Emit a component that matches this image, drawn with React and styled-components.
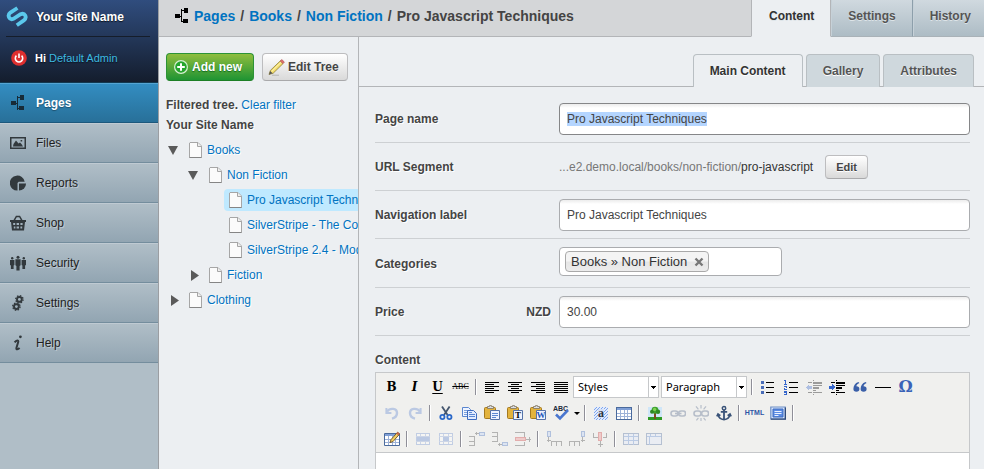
import React, { useEffect, useRef } from "react";
import styled, { createGlobalStyle, css } from "styled-components";

const GlobalStyle = createGlobalStyle`
  *, *::before, *::after { box-sizing: border-box; }
  body {
    margin: 0;
    background: #eceff2;
    color: #444;
    font: 12px/16px "Liberation Sans", Arial, sans-serif;
  }
  button, input, select, textarea { font: inherit; color: inherit; }
  button { cursor: pointer; }
  a { color: #0073c1; text-decoration: none; }
`;

/* ---------- Frame ---------- */

const Shell = styled.div`
  display: flex;
  height: 100vh;
  overflow: hidden;
`;

const Sidebar = styled.aside`
  flex: 0 0 159px;
  background: #b0bec7;
  border-right: 1px solid #9b9ea2;
`;

const Main = styled.main`
  flex: 1;
  min-width: 0;
  display: flex;
  flex-direction: column;
`;

const Body = styled.div`
  flex: 1;
  min-height: 0;
  display: flex;
`;

/* ---------- Sidebar ---------- */

const Branding = styled.div`
  height: 83px;
  padding: 0 8px 0 6px;
  background: linear-gradient(#304d7e, #141d2d);
  border-bottom: 1px solid #11384f;
  text-shadow: 0 1px 1px #0c1420;
`;

const SiteName = styled.a`
  display: flex;
  align-items: center;
  gap: 8px;
  height: 37px;
  padding-bottom: 3px;
  border-bottom: 1px solid #151d2a;
  color: #fff;
  font-weight: bold;
`;

const LoginStatus = styled.div`
  display: flex;
  align-items: center;
  gap: 8px;
  height: 42px;
  padding-left: 5px;
  color: #fff;
  font-size: 11px;

  a { color: #3ebae0; }
`;

const Menu = styled.nav`
  display: flex;
  flex-direction: column;
`;

const MenuLink = styled.a`
  display: flex;
  align-items: center;
  gap: 10px;
  height: 40px;
  padding-left: 10px;
  border-top: 1px solid #bfcad2;
  border-bottom: 1px solid #748d9d;
  background: linear-gradient(#b0bec7, #92a5b2);
  color: #1f1f1f;
  text-shadow: 1px 1px 0 #bfcad2;
  svg { color: #32393d; }

  ${(p) => p.$current && css`
    border-top-color: #55a4d2;
    border-bottom-color: #1c587c;
    background: linear-gradient(#338dc1, #287099);
    color: #fff;
    font-weight: bold;
    text-shadow: 0 1px 1px #1e5270;
    svg { color: #172b38; }
  `}
`;

/* ---------- Header ---------- */

const Header = styled.header`
  display: flex;
  height: 37px;
  font-weight: bold;
`;

const Breadcrumbs = styled.nav`
  flex: 1;
  display: flex;
  align-items: center;
  gap: 5px;
  padding: 0 0 4px 16px;
  background: #d4d6d8;
  border-bottom: 1px solid #b3b5b8;
  font-size: 14px;
  white-space: nowrap;
  svg { color: #000; margin-right: 1px; }
`;

const Tab = styled.button`
  height: 37px;
  padding: 0 16px 4px 17px;
  border: 0;
  border-right: 1px solid #8d9fab;
  border-bottom: 1px solid #a9b2b8;
  background: linear-gradient(#d0d9df, #adbcc5);
  box-shadow: inset 1px 0 0 #c6d1d8;
  color: #545454;
  font-weight: bold;
  text-shadow: 0 1px 0 #dde4e8;

  &:last-child {
    padding-right: 13px;
    border-right: 0;
  }

  ${(p) => p.$current && css`
    background: #eceff2;
    box-shadow: none;
    border-left: 1px solid #b3b5b8;
    border-right-color: #b3b5b8;
    border-bottom-color: #eceff2;
    color: #333;
  `}
`;

/* ---------- Page tree ---------- */

const TreePanel = styled.section`
  flex: 0 0 200px;
  overflow: hidden;
  padding: 16px 0 0 7px;
  border-right: 1px solid #b3b5b8;
  text-shadow: 1px 1px 0 #fff;
`;

const Actions = styled.div`
  display: flex;
  gap: 8px;
  margin-bottom: 14px;
`;

const Button = styled.button`
  display: flex;
  align-items: center;
  justify-content: center;
  height: 28px;
  padding: 0 8px 0 5px;
  gap: 3px;
  border: 1px solid #bdbdbf;
  border-bottom-color: #a9a9ab;
  border-radius: 4px;
  background: linear-gradient(#fff, #d9d9d9);
  font-weight: bold;
  white-space: nowrap;
  text-shadow: 0 1px 0 #fff;

  ${(p) => p.$constructive && css`
    padding: 0 11px 0 6px;
    border-color: #2c9336;
    border-bottom-color: #1d7f26;
    background: linear-gradient(#8fbd3e, #1f9433);
    color: #fff;
    text-shadow: 0 1px 1px #146b1e;
  `}

  ${(p) => p.$small && css`
    height: 24px;
    padding: 0 10px;
    font-size: 11px;
  `}
`;

const TreeLine = styled.div`
  line-height: 20px;
  font-weight: bold;
  a { font-weight: normal; }
`;

const TreeList = styled.ul`
  margin: 0;
  padding: 0 0 0 ${(p) => (p.$nested ? 20 : 0)}px;
  list-style: none;
`;

const TreeRoot = styled.div`
  padding-top: 2px;
`;

const TreeRow = styled.div`
  display: flex;
  align-items: center;
  height: 25px;
`;

const Toggle = styled.button`
  flex: 0 0 18px;
  height: 18px;
  padding: 0;
  border: 0;
  background: none;
  color: #5a5a5a;
  svg { display: block; }
`;

const Spacer = styled.span`
  flex: 0 0 18px;
`;

const TreeLink = styled.a`
  flex: 1;
  min-width: 0;
  overflow: hidden;
  display: flex;
  align-items: center;
  gap: 4px;
  height: 22px;
  padding-left: 5px;
  border-radius: 4px 0 0 4px;
  background: ${(p) => (p.$current ? "#bfe9ff" : "none")};
  white-space: nowrap;
  text-shadow: ${(p) => (p.$current ? "none" : "inherit")};
  svg { flex: none; }
`;

/* ---------- Edit form ---------- */

const EditPanel = styled.section`
  flex: 1;
  min-width: 0;
  display: flex;
  flex-direction: column;
`;

const SubTabs = styled.div`
  display: flex;
  justify-content: flex-end;
  align-items: flex-end;
  gap: 3px;
  height: 50px;
  padding-right: 10px;
  border-bottom: 1px solid #b3b5b8;
`;

const SubTab = styled.button`
  height: 33px;
  margin-bottom: -1px;
  padding: 0 16px;
  border: 1px solid #b9bfc3;
  border-bottom: 0;
  border-radius: 4px 4px 0 0;
  background: ${(p) => (p.$current ? "#eceff2" : "#cfd8dd")};
  color: ${(p) => (p.$current ? "#333" : "#545454")};
  font-weight: bold;
  text-shadow: 0 1px 0 #fff;
`;

const Form = styled.form`
  flex: 1;
  min-height: 0;
  display: flex;
  flex-direction: column;
  padding: 8px 14px 0 16px;
`;

const Field = styled.div`
  display: flex;
  align-items: center;
  min-height: 48px;
  padding: 8px 0 7px;
  border-bottom: 1px solid #cdd0d3;
`;

const Label = styled.label`
  flex: 0 0 184px;
  display: flex;
  justify-content: space-between;
  padding-right: 8px;
  font-weight: bold;
  text-shadow: 1px 1px 0 #fff;
`;

const EditorLabel = styled(Label)`
  flex: none;
  margin: 16px 0 4px;
`;

const TextInput = styled.input`
  flex: 1;
  min-width: 0;
  height: 32px;
  padding: 0 7px;
  border: 1px solid #aaacaf;
  border-radius: 4px;
  background: #fff linear-gradient(#ececec, #fff) no-repeat 0 0 / 100% 4px;
  line-height: 15px;
  outline: none;

  &:focus { border-color: #858688; }
  &::selection { background: #b4d5ff; color: #444; }
`;

const UrlText = styled.span`
  margin-right: 12px;
  color: #333;
`;

const UrlPrefix = styled.span`
  color: #777;
`;

const TagBox = styled.div`
  display: flex;
  align-items: center;
  width: 223px;
  height: 29px;
  margin-bottom: 4px;
  padding: 0 5px;
  border: 1px solid #aaacaf;
  border-radius: 4px;
  background: #fff;
`;

const Tag = styled.span`
  display: flex;
  align-items: center;
  gap: 7px;
  height: 21px;
  padding: 0 4px 0 5px;
  border: 1px solid #a9a9a9;
  border-radius: 4px;
  background: linear-gradient(#f4f4f4 45%, #e6e6e6 55%, #ececec);
  color: #333;
  font-size: 13px;
  white-space: nowrap;
`;

const TagRemove = styled.button`
  padding: 0;
  border: 0;
  background: none;
  color: #777;
  svg { display: block; }
`;

const TagInput = styled.input`
  flex: 1;
  min-width: 0;
  border: 0;
  background: none;
  outline: none;
`;

/* ---------- Rich text editor ---------- */

const Editor = styled.div`
  flex: 1;
  min-height: 0;
  display: flex;
  flex-direction: column;
  border: 1px solid #c6c8ca;
  border-bottom: 0;
  background: #fff;
`;

const Toolbar = styled.div`
  display: flex;
  flex-direction: column;
  gap: 4px;
  padding: 3px 0 2px 4px;
  background: #f0f0ee;
  border-bottom: 1px solid #c6c8ca;
`;

const ToolRow = styled.div`
  display: flex;
  align-items: center;
  height: 22px;
`;

const Tool = styled.button`
  flex: 0 0 ${(p) => (p.$narrow ? 9 : 23)}px;
  display: flex;
  align-items: center;
  justify-content: center;
  height: 22px;
  padding: 0;
  border: 0;
  background: none;
  color: #000;
  opacity: ${(p) => (p.disabled ? 0.35 : 1)};
`;

const Divider = styled.span`
  flex: 0 0 2px;
  height: 16px;
  margin: 0 3px;
  border-left: 1px solid #8f8f98;
  border-right: 1px solid #fff;
`;

const Letter = styled.span`
  font: ${(p) => (p.$italic ? "italic " : "")}bold 12px/14px "DejaVu Serif", serif;
  text-decoration: ${(p) => (p.$underline ? "underline" : "none")};
  text-underline-offset: 2px;
`;

const StruckLetters = styled.span`
  font: 8px/10px "Liberation Serif", "Times New Roman", serif;
  text-decoration: line-through;
`;

const Symbol = styled.span`
  color: #3a63b8;
  font: bold 16px/16px "DejaVu Serif", serif;
`;

const Source = styled.span`
  color: #2d55a5;
  font: bold 7px/10px "Liberation Sans", sans-serif;
`;

const Picker = styled.div`
  display: grid;
  width: 86px;
  height: 22px;
  margin: 0 1px;
  border: 1px solid #c6c8ca;
  background: #fff;

  select, svg { grid-area: 1 / 1; }

  select {
    min-width: 0;
    padding: 0 12px 0 4px;
    border: 0;
    background: none;
    color: #000;
    appearance: none;
    font: 11px/20px "Noto Sans", sans-serif;
  }

  svg {
    justify-self: end;
    pointer-events: none;
  }
`;

const Canvas = styled.textarea`
  flex: 1;
  min-height: 0;
  padding: 8px;
  border: 0;
  background: none;
  resize: none;
  outline: none;
`;

/* ---------- Drawings ---------- */

const Art = ({ size = 16, h, children, ...rest }) => (
  <svg width={size} height={h || size} viewBox={`0 0 ${size} ${h || size}`} aria-hidden="true" {...rest}>
    {children}
  </svg>
);

const LogoMark = () => (
  <Art size={22} fill="none" stroke="#5bc8ec" strokeWidth="3.8">
    <path d="M11.4 2 L4.4 6.6 C0.8 9.4 3.4 14.6 7.4 12.8 L14.6 8.2 C18.8 6.2 21.6 11.4 17.8 14.4 L10.8 19.2" />
  </Art>
);

const PowerMark = () => (
  <Art>
    <circle cx="8" cy="8" r="7.8" fill="#dd2f2f" />
    <path d="M5.4 5.6 A3.7 3.7 0 1 0 10.6 5.6 M8 3.6 V8" fill="none" stroke="#fff" strokeWidth="1.6" />
  </Art>
);

const SitemapIcon = () => (
  <Art size={13} h={16} fill="currentColor" shapeRendering="crispEdges">
    <path d="M0 6h5v4H0z M9 0h4v5H9z M8 11h5v4H8z M6 1h1v13H6z M5 8h1v1H5z M7 2h2v1H7z M7 13h1v1H7z" />
  </Art>
);

const MenuSitemap = () => (
  <Art fill="currentColor" shapeRendering="crispEdges">
    <path d="M1 6h5v4H1z M10 0h4v5h-4z M9 11h5v4H9z M7 1h1v14H7z M6 8h1v1H6z M8 2h2v1H8z M8 13h1v1H8z" />
  </Art>
);

const FilesIcon = () => (
  <Art fill="currentColor">
    <path fillRule="evenodd" d="M0 2h16v12H0z M1.5 3.5v9h13v-9z" />
    <path d="M3 11.5 L3.5 9 L6 5.5 L8.5 8.5 L10 7.5 L11.5 9 L13 11.5z M10.6 5h1.6v1.6h-1.6z" />
  </Art>
);

const ReportsIcon = () => (
  <Art fill="currentColor">
    <path d="M7.5 8 V15.6 A7.5 7.5 0 1 1 14.7 6.8 H8.7z" />
    <path d="M9 8.5h7A7 7 0 0 1 9 15.6z" />
  </Art>
);

const ShopIcon = () => (
  <Art fill="currentColor">
    <path d="M0 5h16v2H0z" />
    <path d="M4 5.6 L6.4 1.4 H9.6 L12 5.6" fill="none" stroke="currentColor" strokeWidth="1.5" />
    <path fillRule="evenodd" d="M1 7h14l-1 8.5H2z M3.2 8v2h2V8z M6.6 8v2h2.4V8z M10.4 8v2h2.2V8z M3.8 11.4v2h1.6v-2z M6.6 11.4v2h2.4v-2z M10.4 11.4v2h1.8v-2z" />
  </Art>
);

const SecurityIcon = () => (
  <Art fill="currentColor">
    <circle cx="2.2" cy="3.2" r="1.2" />
    <circle cx="8" cy="2.2" r="1.5" />
    <circle cx="13.8" cy="3.2" r="1.2" />
    <path d="M0 5h4.4v5l-.8.6V14H.9v-3.4L0 10z M11.6 5H16v5l-.9.6V14h-2.7v-3.4l-.8-.6z M5.4 4.2h5.2v6l-1 .8v4.6H6.4V11l-1-.8z" />
  </Art>
);

const SettingsIcon = () => (
  <Art fill="none" stroke="currentColor">
    <circle cx="9.4" cy="4.4" r="2.4" strokeWidth="1.9" />
    <circle cx="9.4" cy="4.4" r="3.7" strokeWidth="1.3" strokeDasharray="1.5 1.4" />
    <circle cx="6.4" cy="11.6" r="2.4" strokeWidth="1.9" />
    <circle cx="6.4" cy="11.6" r="3.7" strokeWidth="1.3" strokeDasharray="1.5 1.4" />
  </Art>
);

const HelpIcon = () => (
  <Art>
    <circle cx="10.4" cy="1.8" r="1.4" fill="currentColor" />
    <path d="M4.6 7.4 C6.4 5 8.8 4.8 8.2 7 L6.4 13 C6 15 8 14.4 9.6 13" fill="none" stroke="currentColor" strokeWidth="2" />
  </Art>
);

const AddIcon = () => (
  <Art>
    <circle cx="8" cy="8" r="6.4" fill="#26a62e" stroke="#d8efd4" strokeWidth="1.2" />
    <path d="M8 4.2v7.6M4.2 8h7.6" stroke="#fff" strokeWidth="2" />
  </Art>
);

const PencilIcon = () => (
  <Art size={17}>
    <path d="M1 15.5 L2.4 11.4 L12.4 1.8 L15.2 4.4 L5.2 14.2z" fill="#f3dd6c" stroke="#8d7f3c" strokeWidth=".8" />
    <path d="M3.6 12.6 L13.4 3" stroke="#fff6bd" strokeWidth="1" />
    <path d="M1 15.5 L2.2 12 L4.6 14.3z" fill="#555" />
    <path d="M12.2 2 L13.8.6 L16.4 3 L15 4.6z" fill="#e0706e" stroke="#a94b50" strokeWidth=".6" />
    <path d="M4 16.2h7" stroke="#000" strokeOpacity=".2" />
  </Art>
);

const PageIcon = () => (
  <Art size={14} h={16}>
    <path d="M1 .5h8l3.5 3.5v11.5H.5V1z" fill="#fbfbfb" stroke="#a6a6a6" />
    <path d="M.5 15.5h12" stroke="#858585" />
    <path d="M8.5 1v3.5h4" fill="#eee" stroke="#a6a6a6" />
  </Art>
);

const Arrow = ({ open }) => (
  <Art size={18} fill="currentColor">
    {open ? <path d="M2 5h10L7 14z" /> : <path d="M5 4l8 5.5L5 15z" />}
  </Art>
);

const CrossIcon = () => (
  <Art size={10}>
    <path d="M1.5 1.5l7 7M8.5 1.5l-7 7" stroke="currentColor" strokeWidth="2.4" />
  </Art>
);

const PickerArrow = () => (
  <Art size={10} h={20} shapeRendering="crispEdges">
    <path d="M0 0h1v20H0z" fill="#c6c8ca" />
    <path d="M3 9h5v1H3z M4 10h3v1H4z M5 11h1v1H5z" />
  </Art>
);

const LINES = {
  left: [[1, 14], [1, 9], [1, 14], [1, 9], [1, 14], [1, 9]],
  center: [[1, 14], [4, 8], [1, 14], [4, 8], [1, 14], [4, 8]],
  right: [[1, 14], [6, 9], [1, 14], [6, 9], [1, 14], [6, 9]],
  full: [[1, 14], [1, 14], [1, 14], [1, 14], [1, 14], [1, 14]],
};

const AlignIcon = ({ kind }) => (
  <Art shapeRendering="crispEdges">
    {LINES[kind].map(([x, w], i) => <rect key={i} x={x} y={3 + i * 2} width={w} height="1" />)}
  </Art>
);

const BulletIcon = () => (
  <Art shapeRendering="crispEdges">
    <path d="M1 2h3v3H1z M1 7h3v3H1z M1 12h3v3H1z" fill="#4a6db8" />
    <path d="M6 3h8v1H6z M6 8h8v1H6z M6 13h8v1H6z" />
  </Art>
);

const NumberIcon = () => (
  <Art shapeRendering="crispEdges">
    <path d="M2 1h1v4h1v1H1V5h1V2H1V1z M1 7h3v2H2v1h2v1H1V9h2V8H1z M1 12h3v4H1v-1h2v-1H1z" fill="#3566cc" />
    <path d="M6 3h9v1H6z M6 8h9v1H6z M6 13h9v1H6z" />
  </Art>
);

const IndentIcon = ({ out }) => (
  <Art shapeRendering="crispEdges">
    <path d="M7 1h1v1H7z M2 3h4v1H2z M7 3h9v2H7z M7 6h9v1H7z M7 8h6v2H7z M7 11h3v1H7z M2 13h4v1H2z M7 13h9v1H7z M7 15h1v1H7z" />
    <path d={out ? "M0 8l3-3v2h3v3H3v2z" : "M6 8L3 5v2H0v3h3v2z"} fill="#3566cc" />
  </Art>
);

const QuoteIcon = () => (
  <Art fill="#3a5fa8">
    <path d="M6.4 3 C3 4 1.4 7 1.4 10 a3 2.8 0 1 0 3-2.8 C4.4 6 5.4 4.8 7.4 4z M13.6 3 C10.2 4 8.6 7 8.6 10 a3 2.8 0 1 0 3-2.8 C11.6 6 12.6 4.8 14.6 4z" />
  </Art>
);

const RuleIcon = () => <Art><path d="M0 8h16v1H0z" /></Art>;

const UndoIcon = ({ redo }) => (
  <Art fill="none" stroke="#5b82cf" strokeWidth="2.4">
    {redo ? (
      <>
        <path d="M13 6.5 C10 2.6 3 3 3 8 C3 11 5.4 13 8 13.6" />
        <path d="M13.6 3v5h-5" strokeWidth="2" />
      </>
    ) : (
      <>
        <path d="M3 6.5 C6 2.6 13 3 13 8 C13 11 10.6 13 8 13.6" />
        <path d="M2.4 3v5h5" strokeWidth="2" />
      </>
    )}
  </Art>
);

const CutIcon = () => (
  <Art fill="none">
    <path d="M4 1.5 L9.6 10 M11.6 1.5 L6 10" stroke="#44566e" strokeWidth="1.8" />
    <circle cx="4.4" cy="12" r="2.1" stroke="#2a68c8" strokeWidth="1.8" />
    <circle cx="11.4" cy="12" r="2.1" stroke="#2a68c8" strokeWidth="1.8" />
  </Art>
);

const CopyIcon = () => (
  <Art>
    <path d="M1.5 2.5h6l2 2v7h-8z" fill="#eef4ff" stroke="#5a86cf" />
    <path d="M3 5.5h5M3 7.5h5M3 9.5h3" stroke="#7ba0dc" />
    <path d="M6.5 5.5h6l3 3v6h-9z" fill="#e2ecff" stroke="#3e6dc0" />
    <path d="M8 9.5h6M8 11.5h6M8 7.5h3" stroke="#5c88d2" />
  </Art>
);

const PasteIcon = ({ letter, tone = "#000" }) => (
  <Art>
    <rect x=".5" y="2.5" width="11" height="11" rx="1" fill="#e3b33d" stroke="#a47920" />
    <path d="M3.5 3.5v-2h2V.6h2v.9h2v2z" fill="#d9dde5" stroke="#80745a" strokeWidth=".8" />
    <path d="M6.5 5.5h9v9h-9z" fill="#eef3ff" stroke="#5673a8" />
    {letter ? (
      <text x="11" y="13.4" textAnchor="middle" fontFamily="Liberation Serif, serif" fontWeight="bold" fontSize="9" fill={tone}>{letter}</text>
    ) : (
      <path d="M8 8.5h6M8 10.5h6M8 12.5h4" stroke="#5c88d2" />
    )}
  </Art>
);

const SpellIcon = () => (
  <Art>
    <text x="7.5" y="6" textAnchor="middle" fontFamily="Liberation Sans, sans-serif" fontWeight="bold" fontSize="7" fill="#222b3c">ABC</text>
    <path d="M3 9.5l4 4L15 5" fill="none" stroke="#4a76cf" strokeWidth="2.6" />
  </Art>
);

const DropIcon = () => <Art size={8}><path d="M1 3h6L4 6z" /></Art>;

const HatchIcon = () => (
  <Art>
    <rect x="1" y="2" width="14" height="13" fill="#e3ecfc" />
    <path d="M1 5L4 2M1 8L7 2M1 11L10 2M1 14L13 2M3 15L15 3M6 15L15 6M9 15L15 9M12 15L15 12" stroke="#7ea5ee" />
    <path d="M5 4h6v9H5z" fill="#d5e1f8" />
    <text x="8" y="12" textAnchor="middle" fontFamily="Liberation Serif, serif" fontWeight="bold" fontSize="12" fill="#2c3140">a</text>
  </Art>
);

const TableIcon = ({ pencil }) => (
  <Art shapeRendering={pencil ? undefined : "crispEdges"}>
    <path d="M.5 2.5h15v12H.5z" fill="#fff" stroke="#4a6a9c" />
    <path d="M1 3h14v2H1z" fill="#7f9fd6" />
    <path d="M1 8.5h14M1 11.5h14M4.5 5v9M8.5 5v9M11.5 5v9" stroke="#9db2d8" />
    {pencil && <path d="M6 11.5L7 8.6 13.6 1.2 15.6 3 9 10.6z" fill="#f2cf62" stroke="#6d5023" strokeWidth=".9" />}
    {pencil && <path d="M12.4 2.6L13.8 1l1.9 1.8-1.4 1.7z" fill="#c9654a" />}
  </Art>
);

const PanelIcon = ({ cell }) => (
  <Art shapeRendering="crispEdges">
    <path d="M1.5 2.5h13v11h-13z" fill="#fff" stroke="#6b8fd0" />
    <path d={cell ? "M5 6h6v4H5z" : "M2 6h12v4H2z"} fill="#5b82cf" />
    <path d="M1 5.5h14M1 10.5h14M5.5 3v3M10.5 3v3M5.5 10v3M10.5 10v3" stroke="#8aa6da" />
  </Art>
);

const RowIcon = ({ kind }) => (
  <Art shapeRendering="crispEdges" fill="none">
    {kind === "before" && <path d="M0 5.5h5.5v9H0M0 10.5h5M10 2.5H6M7 1v3" stroke="#444" />}
    {kind === "after" && <path d="M0 1.5h5.5v9H0M0 5.5h5M10 13.5H6M7 12v3" stroke="#444" />}
    {kind === "delete" && <path d="M0 1.5h9.5v4M0 14.5h9.5v-4M10 8.5h6M14 6v5" stroke="#444" />}
    {kind === "before" && <path d="M10.5 1.5h5v3h-5z" fill="#b9cff8" stroke="#3e6dc0" />}
    {kind === "after" && <path d="M10.5 11.5h5v3h-5z" fill="#b9cff8" stroke="#3e6dc0" />}
    {kind === "delete" && <path d="M0 6.5h10v3H0z" fill="#e88" stroke="#c33" />}
  </Art>
);

const ColumnIcon = ({ kind }) => (
  <Art shapeRendering="crispEdges" fill="none">
    {kind === "before" && <path d="M5.5 15v-5h10v5M10.5 10v5M2.5 6v5M1 9h4" stroke="#444" />}
    {kind === "after" && <path d="M.5 15v-5h10v5M5.5 10v5M13.5 6v5M12 9h4" stroke="#444" />}
    {kind === "delete" && <path d="M1.5 2v4h4M14.5 2v4h-4M8 10v6M5.5 13h5" stroke="#444" />}
    {kind === "before" && <path d="M1.5.5h3v5h-3z" fill="#b9cff8" stroke="#3e6dc0" />}
    {kind === "after" && <path d="M12.5.5h3v5h-3z" fill="#b9cff8" stroke="#3e6dc0" />}
    {kind === "delete" && <path d="M6.5 1.5h3v8h-3z" fill="#e88" stroke="#c33" />}
  </Art>
);

const SplitIcon = ({ merge }) => (
  <Art shapeRendering="crispEdges">
    <path d="M.5 2.5h15v11H.5z" fill="#dfe9ff" stroke="#4a6a9c" />
    <path d={merge ? "M1 5.5h14M4.5 3v3M9.5 3v3M3.5 6v8" : "M1 5.5h14M1 9.5h14M5.5 3v11M10.5 3v11"} stroke="#5c88d2" fill="none" />
  </Art>
);

const TreeImageIcon = () => (
  <Art>
    <rect x="1" y="2" width="14" height="13" fill="#cfe6f8" />
    <rect x="1" y="12" width="14" height="3" fill="#2f9a25" />
    <path d="M7 8h2v6H7z" fill="#7c4a1c" />
    <circle cx="8" cy="5.2" r="3.4" fill="#3fa32e" />
    <circle cx="5" cy="6.8" r="2" fill="#2f8a22" />
    <circle cx="11" cy="6.8" r="2.2" fill="#2f8a22" />
    <circle cx="7.6" cy="4.4" r="1.6" fill="#83d254" />
  </Art>
);

const LinkIcon = ({ broken }) => (
  <Art fill="none" stroke="#4f6488" strokeWidth="1.6">
    <rect x="1" y="6" width="7" height="5" rx="2.5" />
    <rect x="8.6" y="6" width="7" height="5" rx="2.5" />
    {broken
      ? <path d="M8 0v3.4M3 1.4l2.4 3M13 1.4l-2.4 3M8 16v-3M3.4 15.4l2-2.6M12.6 15.4l-2-2.6" strokeWidth="1.2" />
      : <path d="M5 8.5h6.5" />}
  </Art>
);

const AnchorIcon = () => (
  <Art fill="none" stroke="#3a5378" strokeWidth="1.8">
    <circle cx="8" cy="3.2" r="1.7" strokeWidth="1.5" />
    <path d="M8 5v9.5M4.8 6.8h6.4" />
    <path d="M2 9.4 C2.6 13 5 14.4 8 14.6 C11 14.4 13.4 13 14 9.4 M.8 11.4 L2 9 L4.4 10.6 M15.2 11.4 L14 9 L11.6 10.6" strokeWidth="1.6" />
  </Art>
);

const FullscreenIcon = () => (
  <Art>
    <path d="M.8 2h14.4v12H.8z" fill="#d6e4fc" stroke="#6f8fc4" strokeWidth="1.2" />
    <path d="M.8 14.2h14.6V2.4" fill="none" stroke="#2f4a78" strokeWidth="1.2" />
    <path d="M3 4h10v8H3z" fill="#5b8ce4" stroke="#3e6dc0" />
    <path d="M4.5 6.5h7M4.5 8.5h7M4.5 10.5h4" stroke="#eaf1ff" />
  </Art>
);

/* ---------- Data ---------- */

const MENU = [
  ["Pages", MenuSitemap],
  ["Files", FilesIcon],
  ["Reports", ReportsIcon],
  ["Shop", ShopIcon],
  ["Security", SecurityIcon],
  ["Settings", SettingsIcon],
  ["Help", HelpIcon],
];

const PAGES = [
  {
    title: "Books",
    children: [
      {
        title: "Non Fiction",
        children: [
          { title: "Pro Javascript Techniques", current: true },
          { title: "SilverStripe - The Complete Guide" },
          { title: "SilverStripe 2.4 - Module Extension" },
        ],
      },
      { title: "Fiction", closed: true },
    ],
  },
  { title: "Clothing", closed: true },
];

const TOOLS = [
  [
    ["Bold", <Letter>B</Letter>],
    ["Italic", <Letter $italic>I</Letter>],
    ["Underline", <Letter $underline>U</Letter>],
    ["Strikethrough", <StruckLetters>ABC</StruckLetters>],
    "|",
    ["Align left", <AlignIcon kind="left" />],
    ["Align center", <AlignIcon kind="center" />],
    ["Align right", <AlignIcon kind="right" />],
    ["Align full", <AlignIcon kind="full" />],
    { pick: "Styles" },
    { pick: "Paragraph" },
    "|",
    ["Unordered list", <BulletIcon />],
    ["Ordered list", <NumberIcon />],
    ["Outdent", <IndentIcon out />, true],
    ["Indent", <IndentIcon />],
    ["Blockquote", <QuoteIcon />],
    ["Horizontal rule", <RuleIcon />],
    ["Special character", <Symbol>Ω</Symbol>],
  ],
  [
    ["Undo", <UndoIcon />, true],
    ["Redo", <UndoIcon redo />, true],
    "|",
    ["Cut", <CutIcon />],
    ["Copy", <CopyIcon />],
    ["Paste", <PasteIcon />],
    ["Paste as plain text", <PasteIcon letter="T" />],
    ["Paste from Word", <PasteIcon letter="W" tone="#2458b8" />],
    ["Spellcheck", <SpellIcon />],
    ["Spellcheck language", <DropIcon />, false, true],
    "|",
    ["Visual aids", <HatchIcon />],
    ["Table", <TableIcon />],
    "|",
    ["Insert image", <TreeImageIcon />],
    ["Insert link", <LinkIcon />, true],
    ["Remove link", <LinkIcon broken />, true],
    ["Anchor", <AnchorIcon />],
    "|",
    ["Edit source", <Source>HTML</Source>],
    ["Fullscreen", <FullscreenIcon />],
    "|",
  ],
  [
    ["Table properties", <TableIcon pencil />],
    "|",
    ["Row properties", <PanelIcon />, true],
    ["Cell properties", <PanelIcon cell />, true],
    "|",
    ["Insert row before", <RowIcon kind="before" />, true],
    ["Insert row after", <RowIcon kind="after" />, true],
    ["Delete row", <RowIcon kind="delete" />, true],
    "|",
    ["Insert column before", <ColumnIcon kind="before" />, true],
    ["Insert column after", <ColumnIcon kind="after" />, true],
    ["Delete column", <ColumnIcon kind="delete" />, true],
    "|",
    ["Split cells", <SplitIcon />, true],
    ["Merge cells", <SplitIcon merge />, true],
  ],
];

/* ---------- Composition ---------- */

const TreeNodes = ({ nodes, nested }) => (
  <TreeList $nested={nested}>
    {nodes.map((node) => (
      <li key={node.title}>
        <TreeRow>
          {node.children || node.closed ? (
            <Toggle type="button" aria-label={`Toggle ${node.title}`} aria-expanded={!node.closed}>
              <Arrow open={!node.closed} />
            </Toggle>
          ) : (
            <Spacer />
          )}
          <TreeLink href="#" $current={node.current}>
            <PageIcon />
            {node.title}
          </TreeLink>
        </TreeRow>
        {node.children && <TreeNodes nodes={node.children} nested />}
      </li>
    ))}
  </TreeList>
);

const ToolItem = ({ item }) => {
  if (item === "|") return <Divider />;
  if (item.pick) {
    return (
      <Picker>
        <select aria-label={item.pick} defaultValue={item.pick}>
          <option>{item.pick}</option>
        </select>
        <PickerArrow />
      </Picker>
    );
  }
  const [name, icon, disabled, narrow] = item;
  return <Tool type="button" aria-label={name} disabled={disabled} $narrow={narrow}>{icon}</Tool>;
};

export default function App() {
  const nameRef = useRef(null);

  useEffect(() => {
    nameRef.current.focus();
    nameRef.current.select();
  }, []);

  return (
    <>
      <GlobalStyle />
      <Shell>
        <Sidebar>
          <Branding>
            <SiteName href="#"><LogoMark />Your Site Name</SiteName>
            <LoginStatus>
              <PowerMark />
              <span><b>Hi</b> <a href="#">Default Admin</a></span>
            </LoginStatus>
          </Branding>
          <Menu>
            {MENU.map(([name, Icon], i) => (
              <MenuLink key={name} href="#" $current={i === 0}><Icon />{name}</MenuLink>
            ))}
          </Menu>
        </Sidebar>
        <Main>
          <Header>
            <Breadcrumbs>
              <SitemapIcon />
              <a href="#">Pages</a>
              <span>/</span>
              <a href="#">Books</a>
              <span>/</span>
              <a href="#">Non Fiction</a>
              <span>/</span>
              <span>Pro Javascript Techniques</span>
            </Breadcrumbs>
            <Tab $current>Content</Tab>
            <Tab>Settings</Tab>
            <Tab>History</Tab>
          </Header>
          <Body>
            <TreePanel>
              <Actions>
                <Button $constructive><AddIcon />Add new</Button>
                <Button><PencilIcon />Edit Tree</Button>
              </Actions>
              <TreeLine>Filtered tree. <a href="#">Clear filter</a></TreeLine>
              <TreeLine>Your Site Name</TreeLine>
              <TreeRoot><TreeNodes nodes={PAGES} /></TreeRoot>
            </TreePanel>
            <EditPanel>
              <SubTabs>
                <SubTab $current>Main Content</SubTab>
                <SubTab>Gallery</SubTab>
                <SubTab>Attributes</SubTab>
              </SubTabs>
              <Form onSubmit={(e) => e.preventDefault()}>
                <Field>
                  <Label htmlFor="page-name">Page name</Label>
                  <TextInput id="page-name" ref={nameRef} defaultValue="Pro Javascript Techniques" />
                </Field>
                <Field>
                  <Label as="span">URL Segment</Label>
                  <UrlText><UrlPrefix>...e2.demo.local/books/non-fiction/</UrlPrefix>pro-javascript</UrlText>
                  <Button type="button" $small>Edit</Button>
                </Field>
                <Field>
                  <Label htmlFor="nav-label">Navigation label</Label>
                  <TextInput id="nav-label" defaultValue="Pro Javascript Techniques" />
                </Field>
                <Field>
                  <Label htmlFor="categories">Categories</Label>
                  <TagBox>
                    <Tag>
                      Books » Non Fiction
                      <TagRemove type="button" aria-label="Remove category"><CrossIcon /></TagRemove>
                    </Tag>
                    <TagInput id="categories" />
                  </TagBox>
                </Field>
                <Field>
                  <Label htmlFor="price">Price <span>NZD</span></Label>
                  <TextInput id="price" defaultValue="30.00" />
                </Field>
                <EditorLabel htmlFor="content-body">Content</EditorLabel>
                <Editor>
                  <Toolbar>
                    {TOOLS.map((row, r) => (
                      <ToolRow key={r}>
                        {row.map((item, i) => <ToolItem key={i} item={item} />)}
                      </ToolRow>
                    ))}
                  </Toolbar>
                  <Canvas id="content-body" />
                </Editor>
              </Form>
            </EditPanel>
          </Body>
        </Main>
      </Shell>
    </>
  );
}
